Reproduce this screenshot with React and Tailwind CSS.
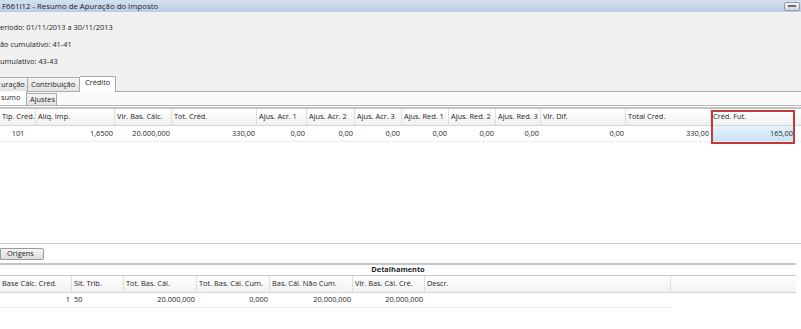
const topCols = [
  { label: "Tip. Créd.", w: 36, value: "101", align: "center" },
  { label: "Alíq. Imp.", w: 79, value: "1,6500" },
  { label: "Vlr. Bas. Cálc.", w: 57, value: "20.000,000" },
  { label: "Tot. Créd.", w: 85, value: "330,00" },
  { label: "Ajus. Acr. 1", w: 50, value: "0,00" },
  { label: "Ajus. Acr. 2", w: 48, value: "0,00" },
  { label: "Ajus. Acr. 3", w: 47, value: "0,00" },
  { label: "Ajus. Red. 1", w: 47, value: "0,00" },
  { label: "Ajus. Red. 2", w: 47, value: "0,00" },
  { label: "Ajus. Red. 3", w: 45, value: "0,00" },
  { label: "Vlr. Dif.", w: 85, value: "0,00" },
  { label: "Total Créd.", w: 85, value: "330,00" },
  { label: "Créd. Fut.", w: 84, value: "165,00", selected: true },
];

const bottomCols = [
  { label: "Base Cálc. Créd.", w: 72, value: "1" },
  { label: "Sit. Trib.", w: 52, value: "50", align: "left" },
  { label: "Tot. Bas. Cál.", w: 73, value: "20.000,000" },
  { label: "Tot. Bas. Cál. Cum.", w: 73, value: "0,000" },
  { label: "Bas. Cál. Não Cum.", w: 83, value: "20.000,000" },
  { label: "Vlr. Bas. Cál. Cré.", w: 72, value: "20.000,000" },
  { label: "Descr.", w: 246, value: "", align: "left" },
];

function HeaderCell({ col }) {
  return (
    <div
      className="shrink-0 h-full flex items-center pl-[2px] pr-[1px] border-r border-[#dedede] whitespace-nowrap overflow-hidden"
      style={{ width: col.w }}
    >
      {col.label}
    </div>
  );
}

function ValueCell({ col }) {
  const justify =
    col.align === "center"
      ? "justify-center"
      : col.align === "left"
      ? "justify-start"
      : "justify-end";
  return (
    <div
      className={`shrink-0 h-full flex items-center px-[2px] whitespace-nowrap overflow-hidden ${justify} ${
        col.selected ? "bg-gradient-to-b from-[#e6f3fc] to-[#c9e3f6]" : ""
      }`}
      style={{ width: col.w }}
    >
      {col.value}
    </div>
  );
}

export default function App() {
  return (
    <div
      className="w-[801px] h-[329px] overflow-hidden bg-white flex flex-col text-[7.4px] text-[#1e1e1e]"
      style={{ fontFamily: '"Open Sans", "DejaVu Sans", sans-serif' }}
    >
      {/* title bar */}
      <div className="h-[12px] shrink-0 flex items-center justify-between pl-[2px] pr-[1px] bg-gradient-to-b from-[#d3e0ef] to-[#bccee4]">
        <span className="leading-[12px] text-[7.8px]">F661I12 - Resumo de Apuração do Imposto</span>
        <div className="w-[16px] h-[9px] rounded-[2px] border border-[#8c99a8] bg-gradient-to-b from-[#f4f4f4] to-[#d6d6d6] flex items-center justify-center">
          <div className="w-[8px] h-[2px] bg-[#6c6c6c]" />
        </div>
      </div>

      {/* header info */}
      <div className="bg-[#f0f0f0] shrink-0 pt-[7px] h-[64px]">
        <div className="h-[17px] leading-[17px]">eríodo: 01/11/2013 a 30/11/2013</div>
        <div className="h-[17px] leading-[17px]">ão cumulativo: 41-41</div>
        <div className="h-[17px] leading-[17px]">umulativo: 43-43</div>
      </div>

      {/* tabs */}
      <div className="h-[16px] shrink-0 bg-[#f0f0f0] flex items-end border-b border-[#a9a9a9]">
        <div className="h-[14px] w-[28px] pl-[1px] flex items-center border border-b-0 border-l-0 border-[#a9a9a9] bg-gradient-to-b from-[#f4f4f4] to-[#e3e3e3]">
          uração
        </div>
        <div className="h-[14px] w-[52px] pl-[3px] flex items-center border border-b-0 border-l-0 border-[#a9a9a9] bg-gradient-to-b from-[#f4f4f4] to-[#e3e3e3]">
          Contribuição
        </div>
        <div className="h-[16px] w-[36px] pl-[5px] pb-[3px] flex items-center border border-b-0 border-l-0 border-[#a9a9a9] bg-white -mb-px">
          Crédito
        </div>
      </div>

      {/* sub tabs */}
      <div className="h-[14px] shrink-0 flex items-end bg-[#fafafa] border-b border-[#b5b5b5]">
        <div className="h-[14px] w-[27px] pl-[1px] flex items-center border-r border-[#a9a9a9] bg-white">
          sumo
        </div>
        <div className="h-[12px] w-[30px] pl-[3px] flex items-center border border-b-0 border-l-0 border-[#a9a9a9] bg-gradient-to-b from-[#f4f4f4] to-[#e3e3e3]">
          Ajustes
        </div>
      </div>

      {/* top grid */}
      <div className="relative shrink-0 border-t-2 border-[#c4c4c4] mt-[1px]">
        <div className="h-[17px] flex bg-gradient-to-b from-white to-[#f1f1f1] border-b border-[#d5d5d5]">
          {topCols.map((c) => (
            <HeaderCell key={c.label} col={c} />
          ))}
        </div>
        <div className="h-[16px] flex border-b border-[#ececec]">
          {topCols.map((c) => (
            <ValueCell key={c.label} col={c} />
          ))}
        </div>
        <div className="absolute left-[711px] top-[1px] w-[84px] h-[34px] border-2 border-[#c0393b]" />
      </div>

      <div className="flex-1" />

      {/* origens */}
      <div className="h-[20px] shrink-0 border-t border-[#c8c8c8] flex items-center">
        <div className="w-[44px] h-[12px] border border-[#9a9a9a] rounded-r-[2px] bg-gradient-to-b from-[#f5f5f5] to-[#dcdcdc] flex items-center pl-[6px]">
          Origens
        </div>
      </div>

      {/* detalhamento grid */}
      <div className="shrink-0 border-t-2 border-[#c4c4c4] mr-[5px] mb-[21px]">
        <div className="h-[11px] flex items-center justify-center font-bold border-b border-[#c8c8c8]">
          Detalhamento
        </div>
        <div className="h-[17px] flex bg-gradient-to-b from-white to-[#f1f1f1] border-b border-[#d5d5d5]">
          {bottomCols.map((c) => (
            <HeaderCell key={c.label} col={c} />
          ))}
        </div>
        <div className="h-[15px] flex">
          <div className="flex border-b border-[#ececec]">
            {bottomCols.map((c) => (
              <ValueCell key={c.label} col={c} />
            ))}
          </div>
        </div>
      </div>
    </div>
  );
}
